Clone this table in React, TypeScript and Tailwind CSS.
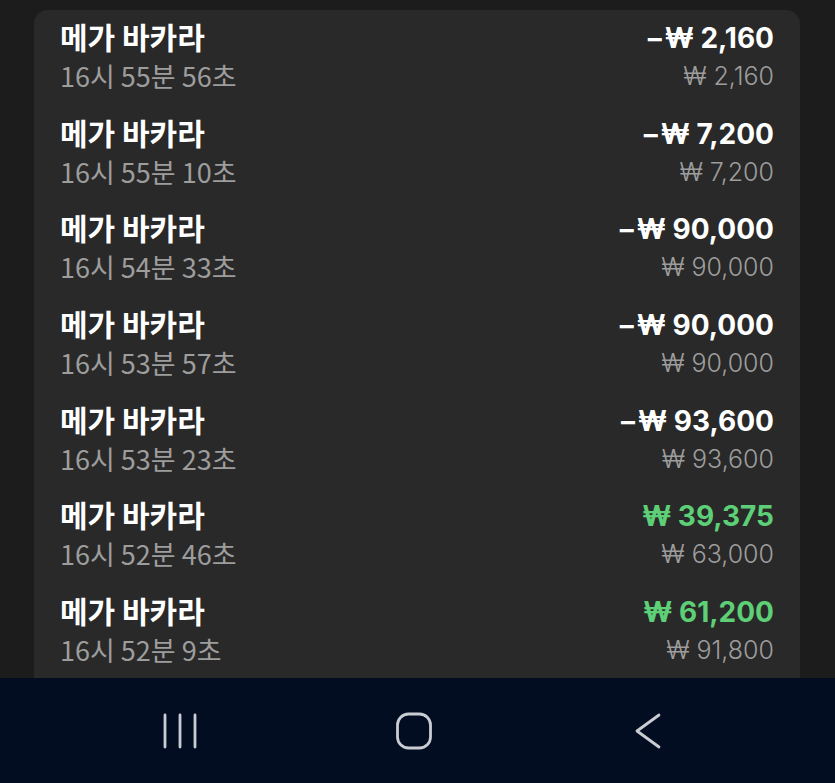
import React from "react";

type Bet = {
  game: string;
  time: string;
  amount: string;
  stake: string;
  win?: boolean;
};

const bets: Bet[] = [
  { game: "메가 바카라", time: "16시 55분 56초", amount: "₩ 2,160", stake: "₩ 2,160" },
  { game: "메가 바카라", time: "16시 55분 10초", amount: "₩ 7,200", stake: "₩ 7,200" },
  { game: "메가 바카라", time: "16시 54분 33초", amount: "₩ 90,000", stake: "₩ 90,000" },
  { game: "메가 바카라", time: "16시 53분 57초", amount: "₩ 90,000", stake: "₩ 90,000" },
  { game: "메가 바카라", time: "16시 53분 23초", amount: "₩ 93,600", stake: "₩ 93,600" },
  { game: "메가 바카라", time: "16시 52분 46초", amount: "₩ 39,375", stake: "₩ 63,000", win: true },
  { game: "메가 바카라", time: "16시 52분 9초", amount: "₩ 61,200", stake: "₩ 91,800", win: true },
];

const kr = { fontFamily: '"Noto Sans CJK KR", "Noto Sans", sans-serif' };
const num = { fontFamily: 'Inter, "Noto Sans CJK KR", sans-serif' };

function BetRow({ bet }: { bet: Bet }) {
  return (
    <div className="flex h-[95.7px] items-start justify-between pt-[10px]">
      <div className="flex flex-col" style={kr}>
        <span className="h-[36px] text-[30px] font-bold leading-[32px] text-white">{bet.game}</span>
        <span className="h-[40px] text-[27px] leading-[40px] text-[#9d9d9d]">{bet.time}</span>
      </div>
      <div className="flex flex-col items-end" style={num}>
        <span
          className={
            bet.win
              ? "h-[36px] text-[28px] font-bold leading-[36px] text-[#5dcf76]"
              : "h-[36px] text-[28px] font-bold leading-[36px] text-white"
          }
        >
          {!bet.win && <span className="mr-[3px]">–</span>}
          {bet.amount}
        </span>
        <span className="h-[40px] text-[25px] font-light leading-[40px] text-[#9d9d9d]">{bet.stake}</span>
      </div>
    </div>
  );
}

export default function App() {
  return (
    <div className="flex h-[783px] w-[835px] flex-col overflow-hidden bg-[#1c1c1c]">
      <div className="flex-1 overflow-hidden pl-[34px] pr-[35px] pt-[10px]">
        <div className="h-full rounded-t-[14px] bg-[#292929] px-[26px]">
          {bets.map((b, i) => (
            <BetRow key={i} bet={b} />
          ))}
        </div>
      </div>

      {/* android nav bar */}
      <div className="flex h-[105px] shrink-0 items-center gap-[194px] bg-[#020d22] pl-[160px]">
        <svg width="40" height="40" viewBox="0 0 40 40" fill="none" stroke="#c9ccd3" strokeWidth="2.8" strokeLinecap="round">
          <path d="M5 4v32M20 4v32M35 4v32" />
        </svg>
        <svg width="40" height="40" viewBox="0 0 40 40" fill="none" stroke="#c9ccd3" strokeWidth="2.8">
          <rect x="3.5" y="3" width="33" height="34" rx="11" />
        </svg>
        <svg width="40" height="40" viewBox="0 0 40 40" fill="none" stroke="#c9ccd3" strokeWidth="2.8" strokeLinecap="round" strokeLinejoin="round">
          <path d="M31 4L9 20l22 16" />
        </svg>
      </div>
    </div>
  );
}
